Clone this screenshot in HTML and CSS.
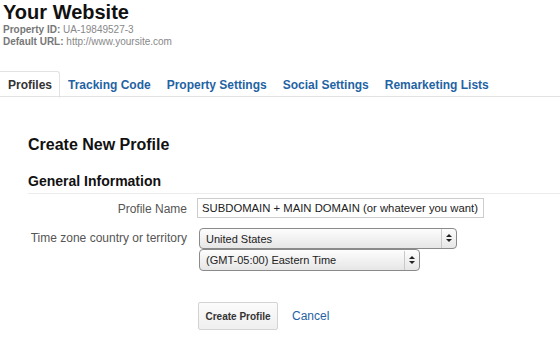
FILE: index.html
```html
<!DOCTYPE html>
<html lang="en">
<head>
  <meta charset="UTF-8" />
  <title>Your Website</title>
  <link rel="stylesheet" href="styles.css">
</head>
<body>
  <div class="site-head">
    <h1 class="site-title">Your Website</h1>
    <div class="site-meta"><b>Property ID:</b> UA-19849527-3</div>
    <div class="site-meta"><b>Default URL:</b> http://www.yoursite.com</div>
  </div>

  <div class="tabs">
    <a class="tab active" href="#">Profiles</a>
    <a class="tab" href="#">Tracking Code</a>
    <a class="tab" href="#">Property Settings</a>
    <a class="tab" href="#">Social Settings</a>
    <a class="tab" href="#">Remarketing Lists</a>
  </div>

  <div class="content">
    <h2 class="page-title">Create New Profile</h2>
    <h3 class="section-title">General Information</h3>

    <div class="form-row">
      <label class="form-label">Profile Name</label>
      <input class="text-input" type="text" value="SUBDOMAIN + MAIN DOMAIN (or whatever you want)" />
    </div>

    <div class="form-row tz-row">
      <label class="form-label">Time zone country or territory</label>
      <div class="select-stack">
        <div class="select wide"><span>United States</span><i class="arrows"></i></div>
        <div class="select narrow"><span>(GMT-05:00) Eastern Time</span><i class="arrows"></i></div>
      </div>
    </div>

    <div class="actions">
      <button class="btn">Create Profile</button>
      <a class="cancel" href="#">Cancel</a>
    </div>
  </div>
</body>
</html>
```

FILE: styles.css
```css
html, body {
  margin: 0;
  padding: 0;
  background: #fff;
  font-family: 'Liberation Sans', Arial, sans-serif;
  color: #222;
}

.site-head {
  padding: 0 0 0 3px;
}
.site-title {
  margin: 0;
  font-size: 20px;
  line-height: 24px;
  font-weight: bold;
  color: #111;
}
.site-meta {
  font-size: 10px;
  line-height: 12px;
  color: #888;
}
.site-meta b {
  color: #777;
}

.tabs {
  display: flex;
  margin-top: 23px;
  border-bottom: 1px solid #e2e2e2;
  height: 25px;
}
.tab {
  font-size: 12px;
  font-weight: bold;
  color: #1f63a3;
  text-decoration: none;
  padding: 7px 8px 0 8px;
  height: 18px;
}
.tab.active {
  color: #333;
  border: 1px solid #e2e2e2;
  border-bottom: 1px solid #fff;
  border-left: none;
  border-radius: 0 3px 0 0;
  margin-bottom: -1px;
  padding: 6px 8px 0 8px;
  width: 43px;
  height: 19px;
}

.content {
  padding: 0 0 0 28px;
}
.page-title {
  margin: 39px 0 0;
  font-size: 16px;
  line-height: 18px;
  font-weight: bold;
  color: #111;
}
.section-title {
  margin: 19px 0 0;
  font-size: 14px;
  line-height: 17px;
  font-weight: bold;
  color: #111;
  padding-bottom: 3px;
  border-bottom: 1px solid #ececec;
}

.form-row {
  display: flex;
  align-items: flex-start;
  margin-top: 4px;
}
.form-label {
  width: 159px;
  text-align: right;
  font-size: 12px;
  color: #555;
  padding-top: 4px;
  flex-shrink: 0;
}
.text-input {
  margin-left: 10px;
  width: 287px;
  height: 20px;
  box-sizing: border-box;
  border: 1px solid #ccc;
  padding: 0 4px;
  font-family: 'Liberation Sans', Arial, sans-serif;
  font-size: 11.3px;
  color: #222;
}
.tz-row {
  margin-top: 10px;
}
.tz-row .form-label {
  padding-top: 3px;
}
.select-stack {
  margin-left: 12px;
  display: flex;
  flex-direction: column;
}
.select {
  display: flex;
  align-items: center;
  justify-content: space-between;
  box-sizing: border-box;
  height: 21px;
  border: 1px solid #8a8a8a;
  border-radius: 4px;
  background: linear-gradient(#fdfdfd, #e6e6e6);
  font-size: 11px;
  color: #222;
  padding: 0 0 0 6px;
}
.select.wide {
  width: 258px;
}
.select.narrow {
  width: 221px;
  height: 22px;
}
.arrows {
  width: 14px;
  height: 19px;
  border-left: 1px solid #c9c9c9;
  position: relative;
}
.arrows::before,
.arrows::after {
  content: "";
  position: absolute;
  left: 4px;
  border-left: 3px solid transparent;
  border-right: 3px solid transparent;
}
.arrows::before {
  top: 5px;
  border-bottom: 3px solid #222;
}
.arrows::after {
  top: 10px;
  border-top: 3px solid #222;
}

.actions {
  display: flex;
  align-items: center;
  margin: 31px 0 0 170px;
}
.btn {
  width: 80px;
  height: 28px;
  border: 1px solid #d3d3d3;
  border-radius: 2px;
  background: linear-gradient(#fbfbfb, #efefef);
  font-family: 'Liberation Sans', Arial, sans-serif;
  font-size: 10px;
  font-weight: bold;
  color: #333;
  padding: 0;
}
.cancel {
  margin-left: 14px;
  font-size: 12px;
  color: #1f63a3;
  text-decoration: none;
}
```
